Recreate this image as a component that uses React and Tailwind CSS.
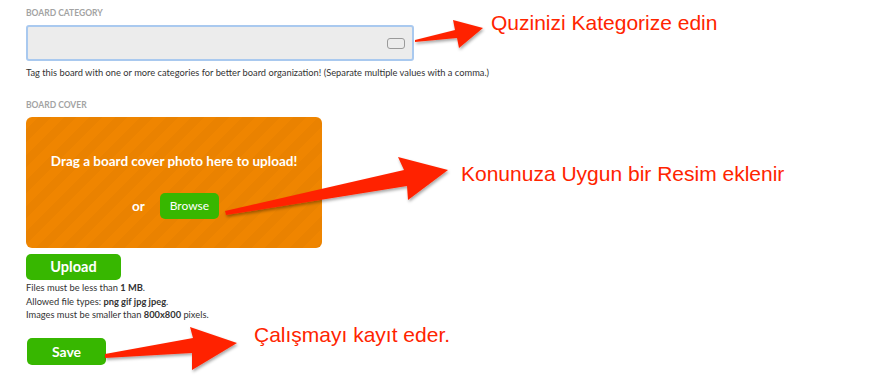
import React from 'react'

const Arrows = () => (
    <svg className="absolute inset-0 pointer-events-none" width="896" height="391" viewBox="0 0 896 391">
        <defs>
            <filter id="shadow" x="-20%" y="-20%" width="140%" height="140%">
                <feDropShadow dx="1" dy="2" stdDeviation="1.5" floodColor="#000" floodOpacity="0.35" />
            </filter>
        </defs>
        <g fill="#ff2400" filter="url(#shadow)">
            {/* category arrow */}
            <polygon points="415,40 455,30 453,20 483,28 459,48 457,38 415,42" />
            {/* cover arrow */}
            <polygon points="225,211 404,170 398,157 448,170 408,200 407,186 226,215" />
            {/* save arrow */}
            <polygon points="105,354 193,338 190,327 237,343 192,370 192,353 105,358" />
        </g>
    </svg>
)

const annotation = { fontFamily: '"Liberation Sans", Arial, sans-serif' }

const App = () => {
    return (
        <div className="relative w-[896px] h-[391px] bg-white overflow-hidden" style={{ fontFamily: 'Lato, "Open Sans", sans-serif' }}>
            <div className="flex flex-col pl-[26px] pt-[8px]">
                {/* Board category */}
                <div className="text-[8.5px] font-bold text-[#a3a3a3] uppercase leading-[10px]">Board Category</div>
                <div className="mt-[7px] w-[388px] h-[36px] rounded-[3px] border-2 border-[#a9c9ef] bg-[#ececec] flex items-center justify-end pr-[7px]">
                    <div className="w-[18px] h-[11px] rounded-[3px] border-[1.5px] border-[#9a9a9a]"></div>
                </div>
                <div className="mt-[6px] text-[9.3px] text-[#333] leading-[12px]">
                    Tag this board with one or more categories for better board organization! (Separate multiple values with a comma.)
                </div>

                {/* Board cover */}
                <div className="mt-[21px] text-[8.5px] font-bold text-[#a3a3a3] uppercase leading-[10px]">Board Cover</div>
                <div className="mt-[7px] w-[296px] h-[131px] rounded-[6px] bg-[repeating-linear-gradient(135deg,#ef8500_0px,#ef8500_9px,#ea8200_9px,#ea8200_18px)] flex flex-col items-center pt-[35px]">
                    <div className="text-white font-bold text-[13.5px] leading-[18px]">Drag a board cover photo here to upload!</div>
                    <div className="mt-[23px] flex items-center gap-[15px] pl-[3px]">
                        <span className="text-white font-bold text-[13.5px]">or</span>
                        <button className="w-[59px] h-[26px] rounded-[5px] bg-[#37b700] text-white text-[12px]">Browse</button>
                    </div>
                </div>
                <button className="mt-[6px] w-[95px] h-[26px] rounded-[5px] bg-[#37b700] text-white font-bold text-[14.5px]">Upload</button>
                <div className="mt-[1px] text-[9.3px] text-[#333] leading-[13.5px]">
                    <div>Files must be less than <b>1 MB</b>.</div>
                    <div>Allowed file types: <b>png gif jpg jpeg</b>.</div>
                    <div>Images must be smaller than <b>800x800</b> pixels.</div>
                </div>
                <button className="mt-[16px] ml-[1px] w-[79px] h-[27px] rounded-[5px] bg-[#37b700] text-white font-bold text-[14px]">Save</button>
            </div>

            <Arrows />

            {/* annotations */}
            <div className="absolute left-[491px] top-[7px] text-[21px] text-[#ff2400]" style={annotation}>Quzinizi Kategorize edin</div>
            <div className="absolute left-[461px] top-[158px] text-[21px] text-[#ff2400]" style={annotation}>Konunuza Uygun bir Resim eklenir</div>
            <div className="absolute left-[254px] top-[319px] text-[21px] text-[#ff2400]" style={annotation}>Çalışmayı kayıt eder.</div>
        </div>
    )
}

export default App
